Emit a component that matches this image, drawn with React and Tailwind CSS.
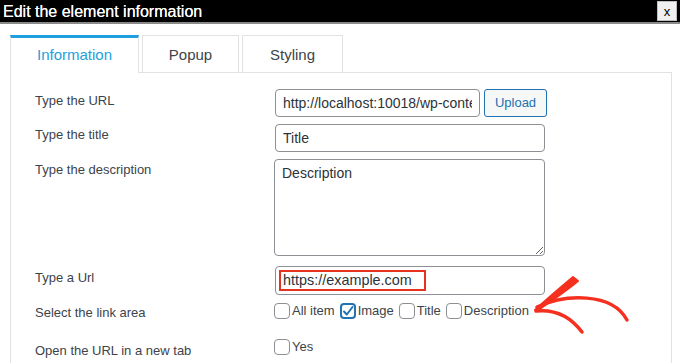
const labelCls = 'w-[240px] shrink-0 text-[13px] leading-[18px] text-[#3c434a]'
const fieldCls = 'border border-[#8c8f94] rounded-[4px] bg-white text-[14px] text-[#2c3338]'

function Tab({ children, active }) {
  if (active) {
    return (
      <div className="relative z-10 -mb-px flex h-[38px] w-[129px] items-center justify-center border-x border-t-[3px] border-x-[#e2e2e2] border-t-[#1f9fe0] bg-white pb-px text-[15px] text-[#239fdc]">
        {children}
      </div>
    )
  }
  return (
    <div className="flex h-[37px] items-center justify-center border-x border-t border-[#e2e2e2] bg-white pt-[2px] text-[15px] text-[#3c434a]">
      {children}
    </div>
  )
}

function Check({ checked, label }) {
  return (
    <span className="flex items-center">
      <span
        className={`flex h-[16px] w-[16px] items-center justify-center rounded-[4px] bg-white ${
          checked ? 'border-2 border-[#2271b1]' : 'border border-[#8c8f94]'
        }`}
      >
        {checked && (
          <svg width="12" height="12" viewBox="0 0 12 12" fill="none" stroke="#2271b1" strokeWidth="2" strokeLinecap="round" strokeLinejoin="round">
            <polyline points="2 6.5 4.8 9.5 10.5 2" />
          </svg>
        )}
      </span>
      <span className="ml-[2px] text-[13px] leading-[16px] text-[#3c434a]">{label}</span>
    </span>
  )
}

export default function App() {
  return (
    <div
      className="relative h-[363px] w-[680px] overflow-hidden bg-white"
      style={{ fontFamily: '"Liberation Sans", Arial, sans-serif' }}
    >
      {/* title bar */}
      <div className="flex h-[24px] items-start justify-between border-b-2 border-[#8a8a8a] bg-black pl-[3px] pr-[3px]">
        <span className="pt-[2px] text-[16px] leading-[19px] text-white [text-shadow:0_0_0.6px_#fff]">
          Edit the element information
        </span>
        <button className="mt-[1px] flex h-[20px] w-[20px] items-center justify-center border border-[#bdbdbd] bg-[#f0f0f0] text-[13px] leading-none text-black">
          x
        </button>
      </div>

      <div className="px-[10px] pt-[11px]">
        {/* tabs */}
        <div className="flex items-end gap-[3px]">
          <Tab active>Information</Tab>
          <div className="w-[97px]">
            <Tab>Popup</Tab>
          </div>
          <div className="w-[101px]">
            <Tab>Styling</Tab>
          </div>
        </div>

        {/* panel */}
        <div className="h-[300px] w-[662px] border-x border-t border-[#e2e2e2] pl-[24px] pt-[16px]">
          <div className="flex items-start">
            <div className={`${labelCls} pt-[3px]`}>Type the URL</div>
            <input
              readOnly
              defaultValue="http://localhost:10018/wp-content/uploads/image.jpg"
              className={`${fieldCls} h-[28px] w-[205px] px-[7px] text-[14.4px] outline-none`}
            />
            <button className="ml-[4px] h-[28px] w-[63px] rounded-[3px] border border-[#2271b1] bg-[#f6f7f7] text-[13px] text-[#2271b1]">
              Upload
            </button>
          </div>

          <div className="mt-[7px] flex items-start">
            <div className={`${labelCls} pt-[2px]`}>Type the title</div>
            <input
              readOnly
              defaultValue="Title"
              className={`${fieldCls} h-[28px] w-[270px] px-[7px] outline-none`}
            />
          </div>

          <div className="mt-[7px] flex items-start">
            <div className={`${labelCls} pt-[2px]`}>Type the description</div>
            <textarea
              readOnly
              defaultValue="Description"
              className={`${fieldCls} -ml-px h-[97px] w-[271px] px-[7px] py-[3px] leading-[20px] outline-none`}
            />
          </div>

          <div className="mt-[10px] flex items-start">
            <div className={`${labelCls} pt-[3px]`}>Type a Url</div>
            <div className={`${fieldCls} flex h-[29px] w-[270px] items-center pl-[3px]`}>
              <span className="flex h-[21px] w-[147px] items-center border-2 border-[#e5331f] pl-[2px] text-[14.4px]">
                https://example.com
              </span>
            </div>
          </div>

          <div className="mt-[8px] flex items-start">
            <div className={`${labelCls} pt-[1px]`}>Select the link area</div>
            <div className="-ml-px flex items-center gap-[5px]">
              <Check label="All item" />
              <Check checked label="Image" />
              <Check label="Title" />
              <Check label="Description" />
            </div>
          </div>

          <div className="mt-[17px] flex items-start">
            <div className={`${labelCls} pt-[3px]`}>Open the URL in a new tab</div>
            <div className="-ml-px">
              <Check label="Yes" />
            </div>
          </div>
        </div>
      </div>

      {/* hand-drawn red arrow annotation */}
      <svg
        className="absolute left-[520px] top-[270px]"
        width="120"
        height="75"
        viewBox="0 0 120 75"
        fill="none"
        stroke="#f5301e"
        strokeLinecap="round"
        strokeLinejoin="round"
      >
        <path d="M15 40 C 27 29, 41 17, 53 7 L 58 11 C 45 22, 31 31, 17 41 Z" fill="#f5301e" strokeWidth="2" />
        <path d="M17 37 C 45 24, 92 22, 107 50" strokeWidth="3.5" />
        <path d="M16 41 C 35 39, 50 46, 62 62" strokeWidth="3.5" />
      </svg>
    </div>
  )
}
